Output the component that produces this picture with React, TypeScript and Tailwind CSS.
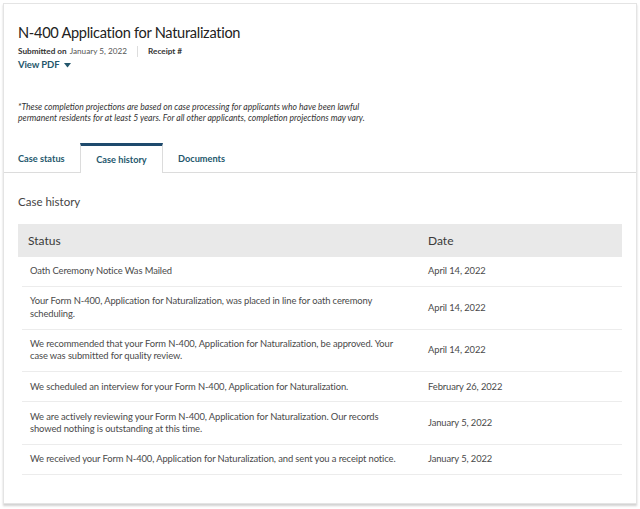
const rows = [
  { status: "Oath Ceremony Notice Was Mailed", date: "April 14, 2022" },
  {
    status:
      "Your Form N-400, Application for Naturalization, was placed in line for oath ceremony scheduling.",
    date: "April 14, 2022",
  },
  {
    status:
      "We recommended that your Form N-400, Application for Naturalization, be approved. Your case was submitted for quality review.",
    date: "April 14, 2022",
  },
  {
    status: "We scheduled an interview for your Form N-400, Application for Naturalization.",
    date: "February 26, 2022",
  },
  {
    status:
      "We are actively reviewing your Form N-400, Application for Naturalization. Our records showed nothing is outstanding at this time.",
    date: "January 5, 2022",
  },
  {
    status:
      "We received your Form N-400, Application for Naturalization, and sent you a receipt notice.",
    date: "January 5, 2022",
  },
];

export default function App() {
  return (
    <div className="h-[509px] w-[640px] bg-white pt-[3px] pl-[3px] font-['Lato',sans-serif] text-[#1b1b1b]">
      <div className="h-[501px] w-[634px] border border-[#e4e4e4] shadow-[0_2px_2px_rgba(0,0,0,0.18)]">
        {/* header */}
        <div className="px-[14px] pt-[19px]">
          <h1 className="text-[14.6px] leading-[20px] tracking-[-0.3px] text-[#222]">
            N-400 Application for Naturalization
          </h1>
          <div className="mt-[2px] flex items-center text-[8.2px] leading-[12px] text-[#333]">
            <span className="font-bold">Submitted on</span>
            <span className="ml-[3px] text-[#555]">January 5, 2022</span>
            <span className="mx-[10px] h-[11px] w-px bg-[#ddd]" />
            <span className="font-bold">Receipt #</span>
          </div>
          <div className="mt-[1px] flex items-center gap-[5px] text-[9.5px] leading-[14px] font-bold tracking-[-0.1px] text-[#24576c]">
            View PDF
            <svg width="7" height="5" viewBox="0 0 7 5">
              <path d="M0 0h7L3.5 4.5z" fill="#24576c" />
            </svg>
          </div>
          <p className="mt-[30px] text-[8.6px] leading-[11px] italic text-[#333]">
            *These completion projections are based on case processing for applicants who have been lawful
            <br />
            permanent residents for at least 5 years. For all other applicants, completion projections may vary.
          </p>
        </div>

        {/* tabs */}
        <div className="mt-[19px] flex h-[30px] border-b border-[#dcdcdc] pl-[14px] text-[9.2px] font-bold text-[#24576c]">
          <div className="flex w-[62px] items-center pt-[2px]">Case status</div>
          <div className="-mb-px flex w-[83px] items-center justify-center border-x border-t-[3px] border-x-[#dcdcdc] border-t-[#1e4a6d] bg-white pt-[1px]">
            Case history
          </div>
          <div className="flex items-center pl-[15px] pt-[2px]">Documents</div>
        </div>

        {/* case history */}
        <div className="px-[14px]">
          <h2 className="mt-[21px] text-[11.5px] leading-[16px] text-[#444]">Case history</h2>
          <div className="mt-[14px]">
            <div className="flex h-[33px] items-center bg-[#e9e9e9] text-[12px] text-[#3a3a3a]">
              <div className="w-[410px] pl-[10px]">Status</div>
              <div>Date</div>
            </div>
            {rows.map((r, i) => (
              <div
                key={i}
                className="ml-[4px] flex items-center border-b border-[#ececec] py-[8.3px] text-[9.4px] leading-[12.5px] tracking-[-0.1px] text-[#4a4a4a]"
              >
                <div className="w-[406px] pr-[22px] pl-[8px]">{r.status}</div>
                <div>{r.date}</div>
              </div>
            ))}
          </div>
        </div>
      </div>
    </div>
  );
}
